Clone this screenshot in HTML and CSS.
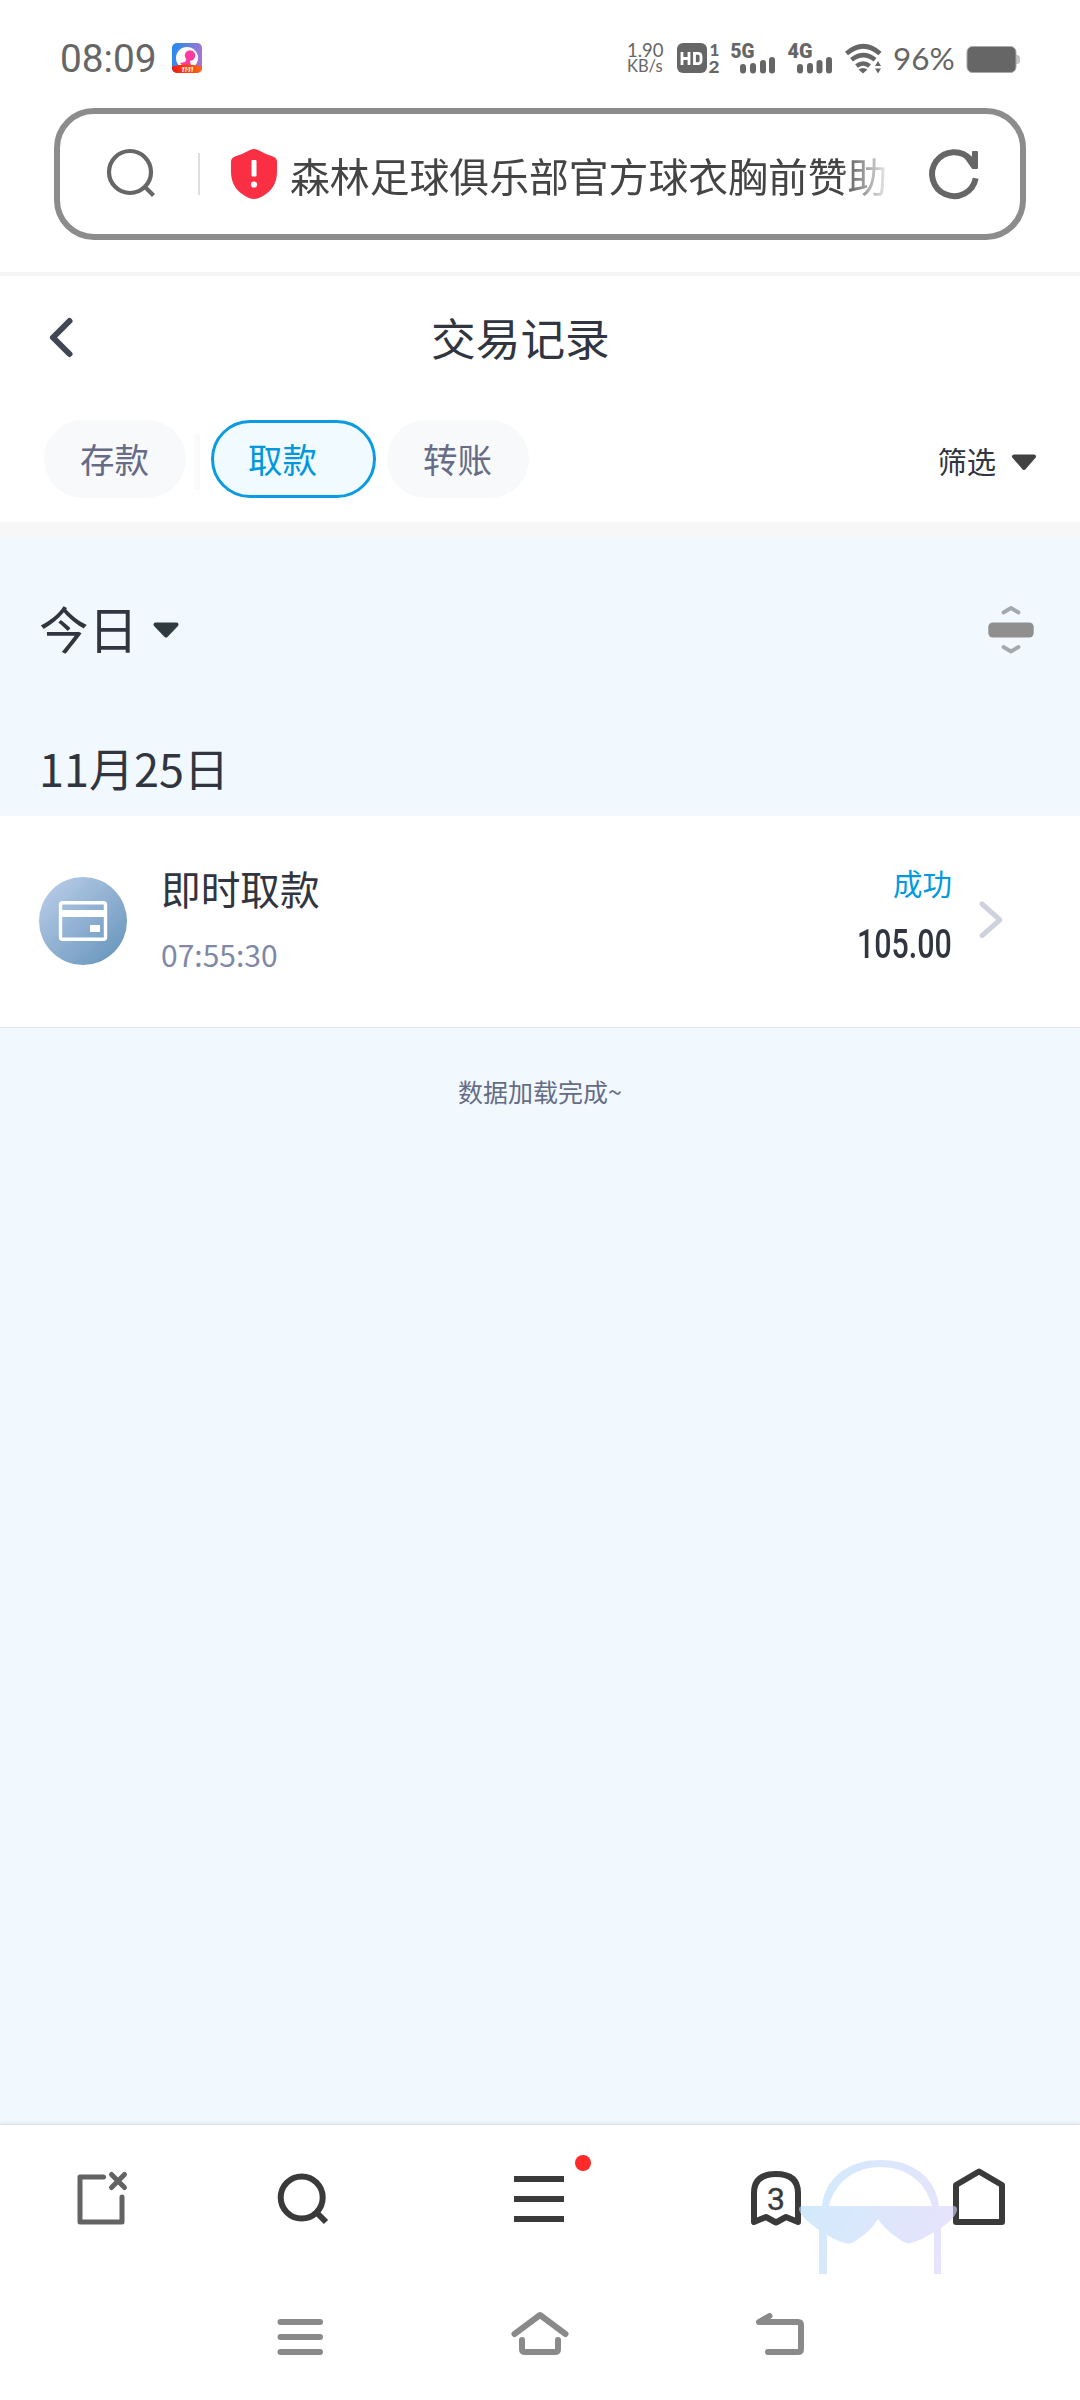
FILE: index.html
```html
<!DOCTYPE html>
<html lang="zh-CN">
<head>
<meta charset="utf-8">
<title>交易记录</title>
<link rel="stylesheet" href="styles.css">
</head>
<body>
<div class="screen">
  <header class="status">
    <span class="clock">08:09</span>
    <svg class="app" viewBox="0 0 30 30" width="30" height="30">
      <defs>
        <linearGradient id="sky" x1="0" y1="0" x2="1" y2=".3"><stop offset="0" stop-color="#1c8df2"/><stop offset="1" stop-color="#a673cf"/></linearGradient>
        <linearGradient id="sale" x1="0" x2="1"><stop offset="0" stop-color="#f01c12"/><stop offset="1" stop-color="#ff6a16"/></linearGradient>
        <clipPath id="tile"><rect width="30" height="30" rx="5"/></clipPath>
      </defs>
      <g clip-path="url(#tile)">
        <rect width="30" height="30" fill="url(#sky)"/>
        <circle cx="15" cy="15" r="11" fill="#fff"/>
        <circle cx="18" cy="12.500" r="5.200" fill="#fb3ba0"/>
        <path d="M15 15l-2 4-5 1 4 4h7l-1-7z" fill="#fb3ba0"/>
        <path d="M0 23.500q15-4 30 0V30H0z" fill="url(#sale)"/>
        <text x="9" y="28.500" class="sale" textLength="13">11·11</text>
      </g>
    </svg>
    <div class="speed"><span class="rate">1.90</span><span class="unit">KB/s</span></div>
    <svg class="hd" viewBox="677 43 43 30" width="43" height="30">
      <rect x="677" y="43" width="30" height="30" rx="6" fill="#666"/>
      <path d="M682 52v13M689 52v13M682 58.500h7M694.500 52v13M693 53.400h5q3 0 3 3v4.200q0 3-3 3h-5" fill="none" stroke="#fff" stroke-width="2.800"/>
      <text x="709.500" y="55.500" class="sim">1</text>
      <text x="708.500" y="72.500" class="sim" textLength="11" lengthAdjust="spacingAndGlyphs">2</text>
    </svg>
    <svg class="sig5" viewBox="730 43 46 30" width="46" height="30">
      <text x="730.500" y="57.500" class="net" textLength="24" lengthAdjust="spacingAndGlyphs">5G</text>
      <path d="M743 67v3.500M753 66v4.500M763 63v7.500M772 60v10.500" class="bars"/>
    </svg>
    <svg class="sig4" viewBox="787 43 46 30" width="46" height="30">
      <text x="787.500" y="57.500" class="net" textLength="25" lengthAdjust="spacingAndGlyphs">4G</text>
      <path d="M800 67v3.500M810 66v4.500M819.500 63v7.500M829 60v10.500" class="bars"/>
    </svg>
    <svg class="wifi" viewBox="845 43 38 31" width="38" height="31">
      <path d="M846.500 53.500q17-14.500 33.500 0M851.500 59.800q12-9.500 23.500 0M856.500 66q7-5 13 0" fill="none" stroke="#666" stroke-width="4.600"/>
      <path d="M858.500 69.500q4.500-3 9 0l-4.500 4z" fill="#666"/>
      <path d="M875 66l3-5 3 5zM875 68.500h6l-3 5z" fill="#666"/>
    </svg>
    <span class="percent">96%</span>
    <svg class="battery" viewBox="966 46 55 27" width="55" height="27">
      <path d="M1015 55h2q3 0 3 3v3q0 3-3 3h-2z" fill="#c4c4c4"/>
      <rect x="967" y="46.500" width="49" height="26" rx="5.500" fill="#666" stroke="#aaa" stroke-width="1"/>
    </svg>
  </header>

  <div class="address">
    <svg class="find" viewBox="107 148 48 50" width="48" height="50" fill="none" stroke="#666" stroke-width="4.200">
      <circle cx="130" cy="172" r="21"/><path d="M145 187l8.500 8.500"/>
    </svg>
    <i class="rule"></i>
    <svg class="shield" viewBox="231 149 46 50" width="46" height="50">
      <path d="M254 149q3 0 5 1.500 6 3.500 14 6 4 1.500 4 5V172q0 18-18 26-5 2-10 0-18-8-18-26v-10.500q0-3.500 4-5 8-2.500 14-6 2-1.500 5-1.500z" fill="#fa2f43"/>
      <rect x="251.500" y="160" width="5" height="16.500" rx="1" fill="#fff"/><circle cx="254" cy="184.500" r="3.100" fill="#fff"/>
    </svg>
    <span class="url">森林足球俱乐部官方球衣胸前赞助</span>
    <svg class="reload" viewBox="929 148 51 52" width="51" height="52">
      <path d="M975.700 178.200A22 22 0 1 1 970.500 159.500" fill="none" stroke="#666" stroke-width="6"/>
      <path d="M973 151h4q1 0 1 1v16q0 1-1 1h-4q-1 0-1.500-1l-7-10 4-3.500 3.500 2.500v-5q0-1 1-1z" fill="#666"/>
    </svg>
  </div>

  <div class="title">
    <svg class="back" viewBox="49 317 25 42" width="25" height="42"><path d="M69.500 321L53 337.500 69.500 354" fill="none" stroke="#404653" stroke-width="6" stroke-linecap="round" stroke-linejoin="round"/></svg>
    <h1>交易记录</h1>
  </div>

  <nav class="tabs">
    <span class="tab">存款</span><i class="sep"></i><span class="tab on">取款</span><span class="tab last">转账</span>
    <span class="filter">筛选</span>
    <svg viewBox="0 0 26 17" width="26" height="17"><path d="M3 2.500h20L13 14z" fill="#424242" stroke="#424242" stroke-width="4" stroke-linejoin="round"/></svg>
  </nav>

  <main>
    <div class="period">
      <span class="today">今日</span>
      <svg viewBox="0 0 26 17" width="26" height="17"><path d="M2.500 2.500h21L13 13.500z" fill="#2f3a41" stroke="#2f3a41" stroke-width="4" stroke-linejoin="round"/></svg>
      <svg class="collapse" viewBox="988 604 46 52" width="46" height="52">
        <rect x="988.300" y="622.500" width="45.400" height="15" rx="4.500" fill="#8f8f8f"/>
        <path d="M1003.500 612.500l7.500-4.500 7.500 4.500M1003.500 647l7.500 4.500 7.500-4.500" fill="none" stroke="#a5a9ad" stroke-width="3.800" stroke-linecap="round" stroke-linejoin="round"/>
      </svg>
    </div>
    <div class="date">11月25日</div>
    <article class="record">
      <svg class="card" viewBox="39 877 88 88" width="88" height="88">
        <defs><linearGradient id="disc" x1=".1" y1=".1" x2=".85" y2=".9"><stop offset="0" stop-color="#b5cae6"/><stop offset="1" stop-color="#6d99bf"/></linearGradient></defs>
        <circle cx="83" cy="921" r="44" fill="url(#disc)"/>
        <rect x="60.500" y="902.700" width="45" height="36.600" rx="2" fill="none" stroke="#fff" stroke-width="3.400"/>
        <path d="M61 913.500h44" stroke="#fff" stroke-width="7"/><rect x="90" y="925" width="10" height="7" fill="#fff"/>
      </svg>
      <div class="what"><span class="name">即时取款</span><span class="time">07:55:30</span></div>
      <div class="result"><span class="ok">成功</span><span class="amount">105.00</span></div>
      <svg class="go" viewBox="979 900 26 40" width="26" height="40"><path d="M982 904l18 15.800-18 15.800" fill="none" stroke="#ced1de" stroke-width="5" stroke-linecap="round" stroke-linejoin="round"/></svg>
    </article>
    <p class="done">数据加载完成~</p>
  </main>

  <footer class="toolbar">
    <svg class="t1" viewBox="76 2168 54 60" width="54" height="60" fill="none" stroke="#636363" stroke-width="5" stroke-linecap="round" stroke-linejoin="round">
      <path d="M103.500 2177H80v45h42v-25M111.500 2174.500l13 13M124.500 2174.500l-13 13"/>
    </svg>
    <svg class="t2" viewBox="276 2168 54 60" width="54" height="60" fill="none" stroke="#3a3a3a" stroke-width="6">
      <circle cx="301.700" cy="2197.500" r="21"/><path d="M316.500 2212.500l9.500 9.500"/>
    </svg>
    <svg class="t3" viewBox="514 2153 80 75" width="80" height="75">
      <path d="M514 2179h50M514 2199h50M514 2219h50" stroke="#3a3a3a" stroke-width="6"/><circle cx="583" cy="2163" r="8" fill="#ff2b2b"/>
    </svg>
    <svg class="t4" viewBox="748 2168 56 60" width="56" height="60">
      <path d="M754 2222V2193q0-19 22-19t22 19V2222l-12-5-10 5.500-10-5.500z" fill="none" stroke="#3a3a3a" stroke-width="6" stroke-linejoin="round"/>
      <text x="776" y="2210" text-anchor="middle" class="count">3</text>
    </svg>
    <svg class="t5" viewBox="950 2166 58 62" width="58" height="62">
      <path d="M956 2222V2185l23-13.500 23 13.500v37z" fill="none" stroke="#3a3a3a" stroke-width="6" stroke-linejoin="round"/>
    </svg>
    <svg class="mascot" viewBox="798 2158 160 118" width="160" height="118">
      <defs><linearGradient id="tint" gradientUnits="userSpaceOnUse" x1="800" y1="2190" x2="955" y2="2250"><stop offset="0" stop-color="#b4defb"/><stop offset="1" stop-color="#dcd3fb"/></linearGradient></defs>
      <g opacity=".62">
        <path d="M822 2206C825 2178 848 2160 880.500 2160S936 2178 939 2206h-7C926 2182 906 2167 880.500 2167S835 2182 829 2206z" fill="url(#tint)"/>
        <path d="M799 2209q0-3 4-3h150q4 0 4 3 0 8-16 19v46h-7v-42q-12 8-23 11-6 1-12-4-15-10-21-20-7 12-20 20-7 6-13 4-8-2-18-8v39h-8v-44q-20-14-20-21z" fill="url(#tint)"/>
      </g>
    </svg>
  </footer>
  <footer class="nav">
    <svg class="n1" viewBox="277 2310 47 48" width="47" height="48" stroke="#8a8a8a" stroke-width="6" stroke-linecap="round"><path d="M280.500 2322h39.500M280.500 2337h39.500M280.500 2352h39.500"/></svg>
    <svg class="n2" viewBox="510 2310 60 48" width="60" height="48" fill="none" stroke="#8a8a8a" stroke-width="6" stroke-linecap="round" stroke-linejoin="round"><path d="M514.500 2334l25.500-19 25.500 19M522 2340v9q0 3 3 3h30q3 0 3-3v-9"/></svg>
    <svg class="n3" viewBox="755 2310 50 48" width="50" height="48" fill="none" stroke="#8a8a8a" stroke-width="6" stroke-linecap="round" stroke-linejoin="round"><path d="M769.500 2316L759 2322h39q3 0 3 3v24q0 3-3 3h-30"/></svg>
  </footer>
</div>
</body>
</html>
```
FILE: styles.css
```css
* { box-sizing: border-box; }
body { margin: 0; font-family: "Noto Sans CJK SC", sans-serif; color: #303540; }
svg { display: block; flex: none; overflow: visible; }
.screen { width: 1080px; height: 2400px; background: #fff; display: flex; flex-direction: column; overflow: hidden; }
.screen > * { flex: none; }

.status { height: 108px; padding: 43px 0 0 60px; display: flex; align-items: flex-start; color: #666; white-space: nowrap; }
.clock { width: 112px; font: 38.800px/32px Roboto, sans-serif; }
.sale { font: italic bold 7px Roboto, sans-serif; fill: #fff; }
.speed { margin-left: 425px; width: 50px; display: flex; flex-direction: column; font-family: Lato, sans-serif; }
.rate { font-size: 18.500px; line-height: 14px; }
.unit { font-size: 16.500px; line-height: 15px; margin-top: 2px; }
.sim { font: 900 17px Lato, sans-serif; fill: #666; }
.net { font: 900 20px Roboto, sans-serif; fill: #666; }
.bars { stroke: #666; stroke-width: 6; stroke-linecap: round; fill: none; }
.sig5 { margin-left: 10px; }
.sig4 { margin-left: 11px; }
.wifi { margin-left: 12px; }
.percent { margin-left: 10px; width: 73px; font: 31.500px/31px Lato, sans-serif; }
.battery { margin-top: 3px; }

.address { margin: 0 54px; height: 132px; border: 6px solid #8c8c8c; border-radius: 40px; display: flex; align-items: flex-start; padding: 34px 0 0 47px; }
.rule { width: 2px; height: 42px; margin: 5px 31px 0 43px; background: #dedede; }
.shield { margin-top: 1px; }
.url { margin-left: 13px; width: 597px; font-size: 39.850px; line-height: 54px; color: #444; white-space: nowrap; overflow: hidden; -webkit-mask-image: linear-gradient(90deg, #000 92%, transparent 101%); mask-image: linear-gradient(90deg, #000 92%, transparent 101%); }
.reload { margin-left: 42px; }

.title { margin-top: 32px; height: 130px; border-top: 4px solid #f5f5f5; padding: 41px 0 0 49px; display: flex; align-items: flex-start; }
h1 { margin: -10px 0 0 357px; font-size: 44.700px; font-weight: 400; line-height: 60px; }

.tabs { height: 135px; border-bottom: 15px solid #f7f7f7; padding: 18px 43px 0 44px; display: flex; align-items: flex-start; }
.tab { height: 78px; width: 142px; border-radius: 39px; background: #f8f9fb; padding-left: 36px; font-size: 34.500px; line-height: 76px; color: #666c85; }
.sep { width: 6px; height: 56px; margin: 14px 11px 0 8px; border-radius: 3px; background: #f9fafc; }
.on { width: 165px; border: 3px solid #0b9be0; background: #f0faff; color: #0097df; line-height: 70px; padding-left: 34px; }
.last { margin-left: 11px; padding-left: 36px; }
.filter { margin-left: auto; margin-right: 15px; font-size: 29.300px; line-height: 80px; }
.tabs > svg { margin-top: 34px; }

main { height: 1587px; background: #f1f9ff; }
.period { height: 198px; padding: 67px 46px 0 39px; display: flex; align-items: flex-start; }
.today { margin-top: -9px; font-size: 49.500px; line-height: 66px; width: 114px; }
.period > svg { margin-top: 18px; }
.period .collapse { margin: 0 0 0 auto; }
.date { height: 81px; padding-left: 39px; font-size: 45px; line-height: 65px; }
.record { height: 212px; background: #fff; border-bottom: 1px solid #e6eaee; display: flex; align-items: flex-start; padding: 61px 75px 0 39px; }
.what { margin: -17px 0 0 34px; display: flex; flex-direction: column; }
.name { font-size: 39.700px; line-height: 56px; }
.time { font-size: 30px; line-height: 40px; margin-top: 18px; color: #8088a8; }
.result { margin: -15px 27px 0 auto; display: flex; flex-direction: column; align-items: flex-end; }
.ok { font-size: 29.500px; line-height: 40px; color: #009bdf; }
.amount { font: 500 40px/48px Roboto, sans-serif; margin-top: 19px; transform: scaleX(.76); transform-origin: right; }
.go { margin-top: 23px; }
.done { margin: 45px 0 0; text-align: center; font-size: 25px; line-height: 36px; color: #666c85; }

.toolbar { position: relative; height: 161px; background: #fff; border-top: 1px solid #dfe2e5; box-shadow: 0 -1px 4px rgba(0, 0, 0, .08); display: flex; align-items: flex-start; padding: 43px 0 0 76px; }
.t2 { margin-left: 146px; }
.t3 { margin: -15px 0 0 184px; }
.t4 { margin-left: 154px; }
.t5 { margin: -2px 0 0 146px; }
.count { font: 400 32px Roboto, sans-serif; fill: #3a3a3a; stroke: #3a3a3a; stroke-width: .4px; }
.mascot { position: absolute; left: 798px; top: 33px; }
.nav { position: relative; height: 116px; background: #fff; display: flex; padding: 25px 0 0 277px; }
.n2 { margin-left: 186px; }
.n3 { margin-left: 185px; }
```
